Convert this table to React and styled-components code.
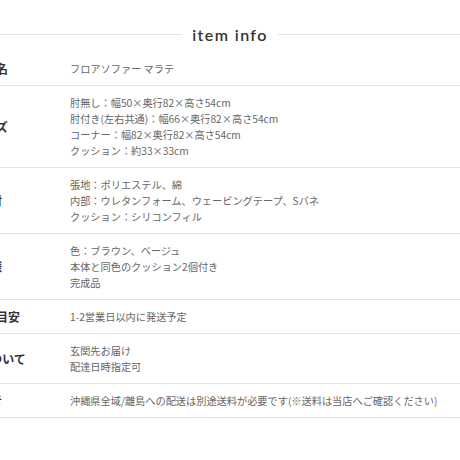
import React from "react";
import styled, { createGlobalStyle } from "styled-components";

const GlobalStyle = createGlobalStyle`
  html, body {
    margin: 0;
    padding: 0;
    background: #fff;
  }
  body {
    font-family: "Noto Sans CJK JP", "Noto Sans", sans-serif;
  }
`;

const rows = [
  { label: "商品名", lines: ["フロアソファー マラテ"] },
  {
    label: "サイズ",
    lines: [
      "肘無し：幅50×奥行82×高さ54cm",
      "肘付き(左右共通)：幅66×奥行82×高さ54cm",
      "コーナー：幅82×奥行82×高さ54cm",
      "クッション：約33×33cm",
    ],
  },
  {
    label: "素材",
    lines: [
      "張地：ポリエステル、綿",
      "内部：ウレタンフォーム、ウェービングテープ、Sバネ",
      "クッション：シリコンフィル",
    ],
  },
  {
    label: "仕様",
    lines: ["色：ブラウン、ベージュ", "本体と同色のクッション2個付き", "完成品"],
  },
  { label: "発送の目安", lines: ["1-2営業日以内に発送予定"] },
  { label: "配送について", lines: ["玄関先お届け", "配達日時指定可"] },
  {
    label: "備考",
    lines: ["沖縄県全域/離島への配送は別途送料が必要です(※送料は当店へご確認ください)"],
  },
];

const App = () => {
  return (
    <Page>
      <GlobalStyle />
      <Heading>
        <span>item info</span>
      </Heading>
      <Table>
        {rows.map((row) => (
          <Row key={row.label}>
            <Label>{row.label}</Label>
            <Value>
              {row.lines.map((line) => (
                <div key={line}>{line}</div>
              ))}
            </Value>
          </Row>
        ))}
      </Table>
    </Page>
  );
};

const Page = styled.div`
  width: 460px;
  height: 460px;
  overflow: hidden;
  background: #fff;
`;

const Heading = styled.h2`
  display: flex;
  align-items: center;
  height: 20px;
  margin: 24px 0 8px;
  font-family: "Lato", "Noto Sans", sans-serif;
  font-size: 16px;
  font-weight: 600;
  letter-spacing: 1.4px;
  color: #333;

  &::before,
  &::after {
    content: "";
    flex: 1;
    height: 1px;
    background: #e3e3e3;
  }
  span {
    margin: 0 10px 0 10px;
  }
`;

const Table = styled.div`
  margin-left: -88px;
`;

const Row = styled.div`
  display: grid;
  grid-template-columns: 156px 1fr;
  align-items: center;
  padding: 9px 0 8px;
  border-bottom: 1px solid #e3e3e3;
`;

const Label = styled.div`
  text-align: center;
  font-size: 12px;
  font-weight: 600;
  color: #333;
  line-height: 16px;
`;

const Value = styled.div`
  padding-left: 2px;
  font-size: 10.2px;
  line-height: 16px;
  color: #666;
  white-space: nowrap;
`;

export default App;
